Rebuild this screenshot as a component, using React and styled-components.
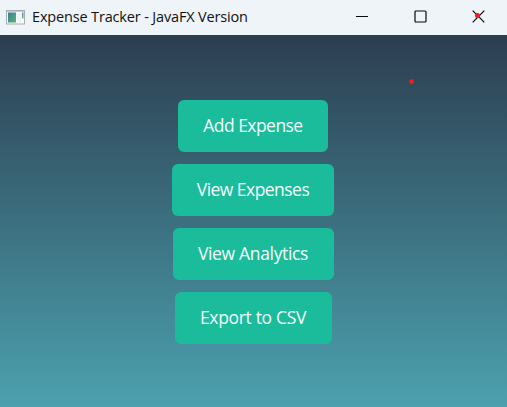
import React from "react";
import styled, { createGlobalStyle } from "styled-components";

const GlobalStyle = createGlobalStyle`
  * { box-sizing: border-box; }
  body { margin: 0; overflow: hidden; background: #4ca1af; }
`;

const Window = styled.div`
  position: relative;
  display: flex;
  flex-direction: column;
  width: 507px;
  height: 407px;
  overflow: hidden;
  font-family: "Open Sans", "Noto Sans", sans-serif;
`;

const TitleBar = styled.header`
  display: flex;
  align-items: center;
  flex: 0 0 35px;
  padding-left: 6px;
  background: #eff4f9;
`;

const Title = styled.h1`
  flex: 1;
  margin: 0 0 1px 7px;
  font-family: "Open Sans", "Noto Sans", sans-serif;
  font-size: 14.5px;
  font-weight: 400;
  line-height: 20px;
  letter-spacing: -0.16px;
  white-space: nowrap;
  color: #111;
`;

const Controls = styled.div`
  display: flex;
  height: 100%;
  margin-right: -1px;
`;

const ControlButton = styled.button`
  display: flex;
  align-items: center;
  justify-content: center;
  width: 58.5px;
  height: 32px;
  padding: 0;
  border: 0;
  background: transparent;
`;

const Content = styled.main`
  display: flex;
  flex: 1;
  flex-direction: column;
  align-items: center;
  gap: 12px;
  padding: 64.5px 1px 0 0;
  background: linear-gradient(to bottom, #2c3e50, #4ca1af);
`;

const ActionButton = styled.button`
  display: flex;
  align-items: center;
  justify-content: center;
  width: ${(p) => p.$width}px;
  height: 52px;
  padding: 0 0 1px;
  border: 0;
  border-radius: 6px;
  background: #1abc9c;
  color: #f4fcfa;
  font-family: "Open Sans", "Noto Sans", sans-serif;
  font-size: 17.5px;
  font-weight: 400;
  letter-spacing: ${(p) => p.$tracking}px;
  white-space: nowrap;
`;

const Dot = styled.span`
  position: absolute;
  left: ${(p) => p.$x}px;
  top: ${(p) => p.$y}px;
  width: 5px;
  height: 5px;
  border-radius: 50%;
  background: #ee1c1c;
`;

const actions = [
  { label: "Add Expense", width: 150, tracking: -0.55 },
  { label: "View Expenses", width: 162, tracking: -0.54 },
  { label: "View Analytics", width: 161, tracking: -0.33 },
  { label: "Export to CSV", width: 157, tracking: -0.33 },
];

function AppIcon() {
  return (
    <svg width="19" height="16" viewBox="0 0 19 16" aria-hidden="true">
      <defs>
        <linearGradient id="pane" x1="0" y1="0" x2="1" y2="1">
          <stop offset="0" stopColor="#3d7b9a" />
          <stop offset="1" stopColor="#55b875" />
        </linearGradient>
        <linearGradient id="strip" x1="0" y1="0" x2="0" y2="1">
          <stop offset="0" stopColor="#4c86b4" />
          <stop offset="1" stopColor="#65bd80" />
        </linearGradient>
      </defs>
      <rect x="0.5" y="0.5" width="18" height="13.5" fill="#f8f9fa" stroke="#a9adb1" />
      <rect x="1" y="1" width="17" height="1" fill="#c5c8cc" />
      <rect x="2" y="2.5" width="8" height="10" fill="url(#pane)" />
      <rect x="11" y="3" width="4" height="9" fill="#f1f3f5" />
      <rect x="16" y="2.5" width="1.5" height="6" fill="url(#strip)" />
    </svg>
  );
}

function ControlGlyph({ kind }) {
  return (
    <svg width="13" height="13" viewBox="0 0 13 13" fill="none" stroke="#080808">
      {kind === "Minimize" && <path d="M0.7 6.5h12" shapeRendering="crispEdges" />}
      {kind === "Maximize" && <rect x="1" y="1" width="11" height="11" rx="1" strokeWidth="1.2" />}
      {kind === "Close" && <path d="M0.7 0.7l11.6 11.6M12.3 0.7L0.7 12.3" strokeWidth="1.2" />}
    </svg>
  );
}

export default function App() {
  return (
    <Window>
      <GlobalStyle />
      <TitleBar>
        <AppIcon />
        <Title>Expense Tracker - JavaFX Version</Title>
        <Controls>
          {["Minimize", "Maximize", "Close"].map((kind) => (
            <ControlButton key={kind} aria-label={kind}>
              <ControlGlyph kind={kind} />
            </ControlButton>
          ))}
        </Controls>
      </TitleBar>
      <Content>
        {actions.map(({ label, width, tracking }) => (
          <ActionButton key={label} $width={width} $tracking={tracking}>
            {label}
          </ActionButton>
        ))}
      </Content>
      <Dot $x={474.5} $y={13.3} />
      <Dot $x={408.5} $y={79.3} />
    </Window>
  );
}
